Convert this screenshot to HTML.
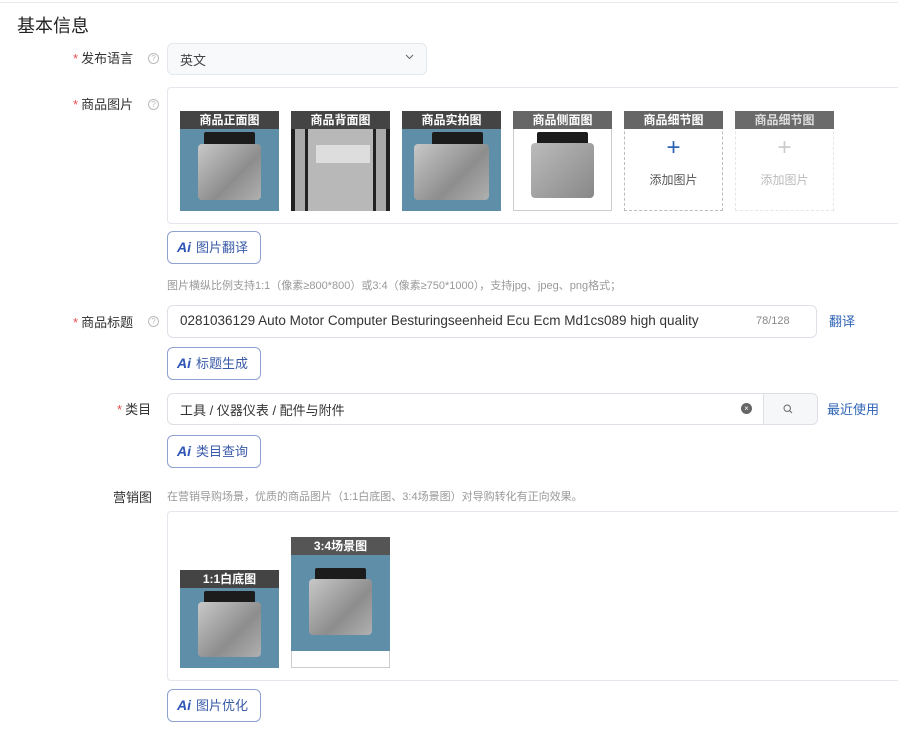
<!DOCTYPE html>
<html><head><meta charset="utf-8">
<style>
*{margin:0;padding:0;box-sizing:border-box}
body{width:898px;height:744px;background:#fff;position:relative;overflow:hidden;font-family:"Liberation Sans","Noto Sans CJK SC",sans-serif;color:#333}
.a{position:absolute}
.lbl{position:absolute;font-size:13px;color:#333;text-align:right;white-space:nowrap}
.lbl b{color:#e34d4d;font-weight:normal;margin-right:3px}
.help{position:absolute;width:11px;height:11px;border:1px solid #bbb;border-radius:50%;font-size:8px;color:#bbb;text-align:center;line-height:9px}
.inp{position:absolute;border:1px solid #dcdfe6;border-radius:6px;background:#fff}
.ai{position:absolute;width:94px;height:33px;border:1px solid #8ea2cf;border-radius:6px;font-size:13px;color:#3a5ba8;line-height:31px;padding-left:9px;white-space:nowrap}
.ai i{font-style:italic;font-weight:bold;font-size:14px;color:#2e55b5;margin-right:5px}
.th{position:absolute;width:99px;height:100px}
.th .h{height:18px;background:#444;color:#fff;font-size:12px;text-align:center;line-height:18px;font-weight:bold}
.ph{position:relative;background:#5f8ea8;overflow:hidden}
.ph .c{position:absolute;left:24%;top:4%;width:52%;height:18%;background:#1c1c1c;border-radius:2px}
.ph .m{position:absolute;left:18%;top:18%;width:64%;height:68%;background:linear-gradient(135deg,#c8c8c8,#8d8d8d 60%,#b0b0b0);border-radius:4px}
.hint{position:absolute;font-size:11px;color:#999;white-space:nowrap}
</style></head><body>
<div class="a" style="left:0;top:2px;width:898px;height:1px;background:#e8e8e8"></div>
<div class="a" style="left:17px;top:12px;font-size:18px;color:#222">基本信息</div>

<div class="lbl" style="left:73px;top:48px"><b>*</b>发布语言</div>
<div class="help" style="left:148px;top:53px">?</div>
<div class="inp" style="left:167px;top:43px;width:260px;height:32px;background:#f8f9fb;border-color:#e4e7ed"></div>
<div class="a" style="left:180px;top:50px;font-size:13px;color:#444">英文</div>
<svg class="a" style="left:405px;top:54px" width="9" height="6" viewBox="0 0 9 6"><path d="M1 1l3.5 3.5L8 1" fill="none" stroke="#666" stroke-width="1"/></svg>

<div class="lbl" style="left:73px;top:94px"><b>*</b>商品图片</div>
<div class="help" style="left:148px;top:99px">?</div>
<div class="a" style="left:167px;top:87px;width:740px;height:137px;border:1px solid #e4e7ed;border-radius:4px"></div>

<div class="th" style="left:180px;top:111px"><div class="h">商品正面图</div><div class="ph" style="height:82px"><div class="c"></div><div class="m"></div></div></div>
<div class="th" style="left:291px;top:111px"><div class="h">商品背面图</div><div class="ph" style="height:82px;background:#a8a8a8"><div class="m" style="left:0;top:0;width:100%;height:100%;border-radius:0;background:linear-gradient(90deg,#222 0 4%,#aaa 4% 14%,#222 14% 17%,#b8b8b8 17% 83%,#222 83% 86%,#aaa 86% 96%,#222 96%)"></div><div class="a" style="left:25%;top:20%;width:55%;height:22%;background:#ddd"></div></div></div>
<div class="th" style="left:402px;top:111px"><div class="h">商品实拍图</div><div class="ph" style="height:82px"><div class="c" style="left:30%"></div><div class="m" style="left:12%;width:76%"></div></div></div>
<div class="th" style="left:513px;top:111px;border:1px solid #ccc"><div class="h" style="background:#666;margin:-1px -1px 0">商品侧面图</div><div class="ph" style="height:80px;background:#fff"><div class="c"></div><div class="m" style="background:linear-gradient(135deg,#bbb,#888)"></div></div></div>
<div class="th" style="left:624px;top:111px;border:1px dashed #bbb"><div class="h" style="background:#666;margin:-1px -1px 0">商品细节图</div><div style="text-align:center;color:#2e64b5;font-size:24px;line-height:26px;margin-top:6px">+</div><div style="text-align:center;font-size:12px;color:#555;margin-top:10px">添加图片</div></div>
<div class="th" style="left:735px;top:111px;border:1px dashed #e6e6e6"><div class="h" style="background:#6b6b6b;color:#ddd;margin:-1px -1px 0">商品细节图</div><div style="text-align:center;color:#ccc;font-size:24px;line-height:26px;margin-top:6px">+</div><div style="text-align:center;font-size:12px;color:#bbb;margin-top:10px">添加图片</div></div>

<div class="ai" style="left:167px;top:231px"><i>Ai</i>图片翻译</div>
<div class="hint" style="left:167px;top:277px">图片横纵比例支持1:1（像素≥800*800）或3:4（像素≥750*1000），支持jpg、jpeg、png格式；</div>

<div class="lbl" style="left:73px;top:312px"><b>*</b>商品标题</div>
<div class="help" style="left:148px;top:316px">?</div>
<div class="inp" style="left:167px;top:305px;width:650px;height:33px"></div>
<div class="a" style="left:180px;top:313px;font-size:13.5px;color:#333;white-space:nowrap">0281036129 Auto Motor Computer Besturingseenheid Ecu Ecm Md1cs089 high quality</div>
<div class="a" style="left:756px;top:315px;font-size:11px;color:#888">78/128</div>
<div class="a" style="left:829px;top:311px;font-size:13px;color:#2e64b5">翻译</div>
<div class="ai" style="left:167px;top:347px"><i>Ai</i>标题生成</div>

<div class="lbl" style="left:117px;top:399px"><b>*</b>类目</div>
<div class="inp" style="left:167px;top:393px;width:651px;height:32px"></div>
<div class="a" style="left:763px;top:394px;width:54px;height:30px;background:#f6f7f9;border-left:1px solid #dcdfe6;border-radius:0 6px 6px 0"></div>
<svg class="a" style="left:783px;top:404px" width="10" height="10" viewBox="0 0 10 10"><circle cx="4.2" cy="4.2" r="3.2" fill="none" stroke="#666" stroke-width="1"/><path d="M6.6 6.6L9 9" stroke="#666" stroke-width="1"/></svg>
<div class="a" style="left:741px;top:403px;width:11px;height:11px;border-radius:50%;background:#666;color:#fff;font-size:8px;line-height:11px;text-align:center">×</div>
<div class="a" style="left:180px;top:400px;font-size:13px;color:#333">工具 / 仪器仪表 / 配件与附件</div>
<div class="a" style="left:827px;top:399px;font-size:13px;color:#2e64b5">最近使用</div>
<div class="ai" style="left:167px;top:435px"><i>Ai</i>类目查询</div>

<div class="lbl" style="left:113px;top:487px">营销图</div>
<div class="hint" style="left:167px;top:488px">在营销导购场景，优质的商品图片（1:1白底图、3:4场景图）对导购转化有正向效果。</div>
<div class="a" style="left:167px;top:511px;width:740px;height:170px;border:1px solid #e4e7ed;border-radius:4px"></div>
<div class="th" style="left:180px;top:570px"><div class="h">1:1白底图</div><div class="ph" style="height:80px"><div class="c"></div><div class="m"></div></div></div>
<div class="th" style="left:291px;top:537px;height:131px;border:1px solid #ccc"><div class="h" style="background:#555;margin:-1px -1px 0">3:4场景图</div><div class="ph" style="height:96px;margin:0 -1px"><div class="c" style="top:14%"></div><div class="m" style="top:25%;height:58%"></div></div></div>
<div class="ai" style="left:167px;top:689px"><i>Ai</i>图片优化</div>
</body></html>
